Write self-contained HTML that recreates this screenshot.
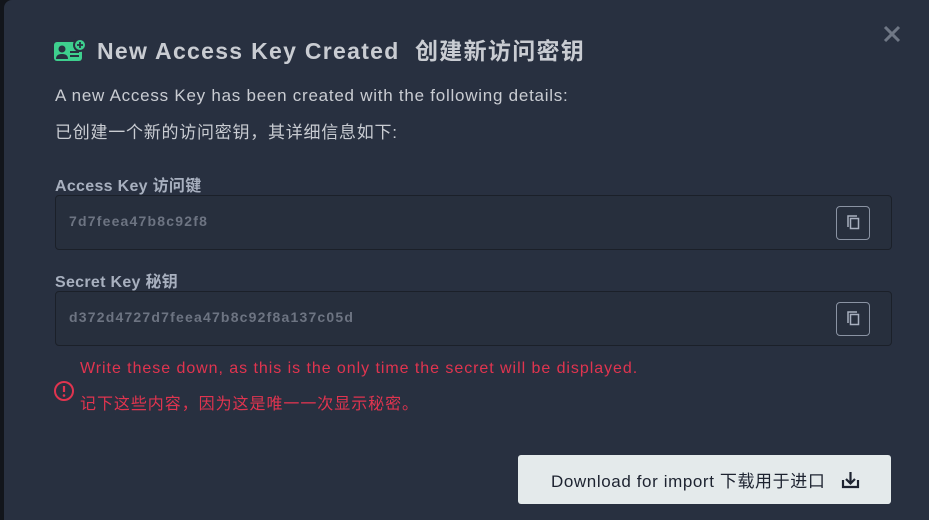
<html><head><style>
body{margin:0;width:929px;height:512px;background:#12151b;overflow:hidden;font-family:"Liberation Sans","Noto Sans CJK SC",sans-serif;}
.m{position:absolute;left:4px;top:0;width:925px;height:520px;background:#283040;border-radius:8px 0 0 0;}
.t{position:absolute;left:97px;top:32px;font-size:23px;font-weight:bold;color:#c9ccd2;letter-spacing:1.3px;}
.p{position:absolute;left:55px;font-size:17px;color:#c9ccd2;letter-spacing:0.75px;}
.l{position:absolute;left:55px;font-size:16px;font-weight:bold;color:#a8b0bf;letter-spacing:0.3px;}
.in{position:absolute;left:55px;width:835px;height:53px;border:1px solid #1b2029;border-radius:4px;background:#272f3d;}
.in span{position:absolute;left:13px;top:17px;font-size:14px;font-weight:bold;color:#6d7482;letter-spacing:1.2px;}
.cp{position:absolute;right:21px;top:10px;width:34px;height:34px;border:1px solid #8a93a3;border-radius:4px;box-sizing:border-box;}
.r{position:absolute;left:80px;font-size:16px;color:#e0344f;letter-spacing:0.95px;}
.b{position:absolute;left:518px;top:455px;width:373px;height:49px;background:#e4eaeb;border-radius:3px;font-size:17px;color:#1d2330;}
</style></head><body>
<div class="m"></div>
<svg style="position:absolute;left:54px;top:38px" width="33" height="24" viewBox="0 0 33 24"><rect x="0" y="4" width="28" height="19" rx="3" fill="#3ecf8e"/><circle cx="8" cy="11" r="3.5" fill="#283040"/><path d="M2 21c0-4 3-5 6-5s6 1 6 5z" fill="#283040"/><rect x="16" y="13" width="9" height="2" fill="#283040"/><rect x="16" y="17" width="9" height="2" fill="#283040"/><circle cx="26" cy="7" r="6" fill="#3ecf8e" stroke="#283040" stroke-width="2"/><path d="M26 4v6M23 7h6" stroke="#283040" stroke-width="1.8"/></svg>
<div class="t">New Access Key Created &nbsp;创建新访问密钥</div>
<svg style="position:absolute;left:882px;top:24px" width="20" height="20"><path d="M3 3l14 14M17 3L3 17" stroke="#6f7785" stroke-width="3"/></svg>
<div class="p" style="top:86px">A new Access Key has been created with the following details:</div>
<div class="p" style="top:118px">已创建一个新的访问密钥，其详细信息如下:</div>
<div class="l" style="top:172px">Access Key 访问键</div>
<div class="in" style="top:195px"><span>7d7feea47b8c92f8</span><div class="cp"><svg width="33" height="33" style="position:absolute;left:-1px;top:-1px"><path d="M12 21V10h9" fill="none" stroke="#a8b0bf" stroke-width="1.5"/><rect x="14.5" y="12.5" width="8" height="10" fill="none" stroke="#a8b0bf" stroke-width="1.5"/></svg></div></div>
<div class="l" style="top:268px">Secret Key 秘钥</div>
<div class="in" style="top:291px"><span>d372d4727d7feea47b8c92f8a137c05d</span><div class="cp"><svg width="33" height="33" style="position:absolute;left:-1px;top:-1px"><path d="M12 21V10h9" fill="none" stroke="#a8b0bf" stroke-width="1.5"/><rect x="14.5" y="12.5" width="8" height="10" fill="none" stroke="#a8b0bf" stroke-width="1.5"/></svg></div></div>
<div class="r" style="top:360px">Write these down, as this is the only time the secret will be displayed.</div>
<div class="r" style="top:390px">记下这些内容，因为这是唯一一次显示秘密。</div>
<svg style="position:absolute;left:53px;top:380px" width="22" height="22"><circle cx="11" cy="11" r="9" fill="none" stroke="#e0344f" stroke-width="2"/><path d="M11 6v6" stroke="#e0344f" stroke-width="2.2"/><circle cx="11" cy="15.5" r="1.3" fill="#e0344f"/></svg>
<div class="b"><span style="position:absolute;left:33px;top:12px;letter-spacing:0.6px">Download for import 下载用于进口</span><svg style="position:absolute;left:323px;top:15px" width="19" height="19"><path d="M9.5 2v11M5 9l4.5 4.5L14 9" fill="none" stroke="#1d2330" stroke-width="2.2"/><path d="M2 10v7h15v-7" fill="none" stroke="#1d2330" stroke-width="2.2"/></svg></div>
</body></html>
